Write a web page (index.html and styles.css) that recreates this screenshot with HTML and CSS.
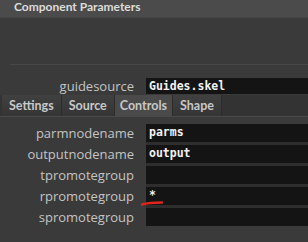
FILE: index.html
```html
<!DOCTYPE html>
<html>
<head>
<meta charset="utf-8">
<title>Component Parameters</title>
<link rel="stylesheet" href="styles.css">
</head>
<body>

<div class="title">Component Parameters</div>

<div class="top">
  <div class="rule"></div>
  <div class="parm">
    <div class="label">guidesource</div>
    <div class="field">Guides.skel</div>
  </div>
</div>

<div class="tabs">
  <div class="tab">Settings</div>
  <div class="tab">Source</div>
  <div class="tab active">Controls</div>
  <div class="tab">Shape</div>
</div>

<div class="panel">
  <div class="parm">
    <div class="label">parmnodename</div>
    <div class="field">parms</div>
  </div>
  <div class="parm">
    <div class="label">outputnodename</div>
    <div class="field">output</div>
  </div>
  <div class="parm">
    <div class="label">tpromotegroup</div>
    <div class="field"></div>
  </div>
  <div class="parm">
    <div class="label">rpromotegroup</div>
    <div class="field">*
      <svg class="mark" width="24" height="8" viewBox="0 0 24 8">
        <path d="M1,5.5 C6,4 12,3.5 21,3.5" stroke="#e0241c" stroke-width="2.4" fill="none" stroke-linecap="round"/>
      </svg>
    </div>
  </div>
  <div class="parm">
    <div class="label">spromotegroup</div>
    <div class="field"></div>
  </div>
</div>

</body>
</html>
```

FILE: styles.css
```css
body {
  margin: 0;
  background: #3a3a3a;
  font-family: "Open Sans", "Noto Sans", sans-serif;
  font-size: 13px;
  color: #c4c4c4;
  overflow: hidden;
}

.title {
  height: 17px;
  line-height: 14px;
  padding-left: 14px;
  background: #4b4b4b;
  border-bottom: 1px solid #454545;
  font-family: Lato, sans-serif;
  font-weight: bold;
  font-size: 12px;
  color: #dcdcdc;
}

.top {
  padding-top: 46px;
}

.rule {
  height: 1px;
  margin-left: 10px;
  background: #474747;
  margin-bottom: 13px;
}

.parm {
  display: grid;
  grid-template-columns: 146px 1fr;
  align-items: center;
}

.label {
  text-align: right;
  padding-right: 12px;
  line-height: 16px;
}

.field {
  position: relative;
  height: 16px;
  line-height: 16px;
  padding-left: 3px;
  background: #141414;
  font-family: "DejaVu Sans Mono", monospace;
  font-weight: bold;
  font-size: 11.5px;
  color: #f2f2f2;
}

.tabs {
  display: flex;
  margin-top: 1px;
  padding-left: 2px;
  height: 21px;
  background: #333;
  border-bottom: 1px solid #4a4a4a;
}

.tab {
  padding: 0 7px;
  line-height: 21px;
  font-family: Lato, sans-serif;
  font-weight: bold;
  font-size: 12.5px;
  color: #c8c8c8;
  background: linear-gradient(#404040, #353535);
  border-right: 1px solid #2c2c2c;
}

.tab.active {
  background: #4a4a4a;
  padding: 0 5px;
}

.panel {
  padding-top: 7px;
  display: flex;
  flex-direction: column;
  gap: 3px;
}

.panel .field {
  height: 18px;
  line-height: 16px;
  box-shadow: 0 3px 0 #2e2e2e;
}

.panel .label {
  line-height: 18px;
}

.mark {
  position: absolute;
  left: -5px;
  top: 12px;
}
```
